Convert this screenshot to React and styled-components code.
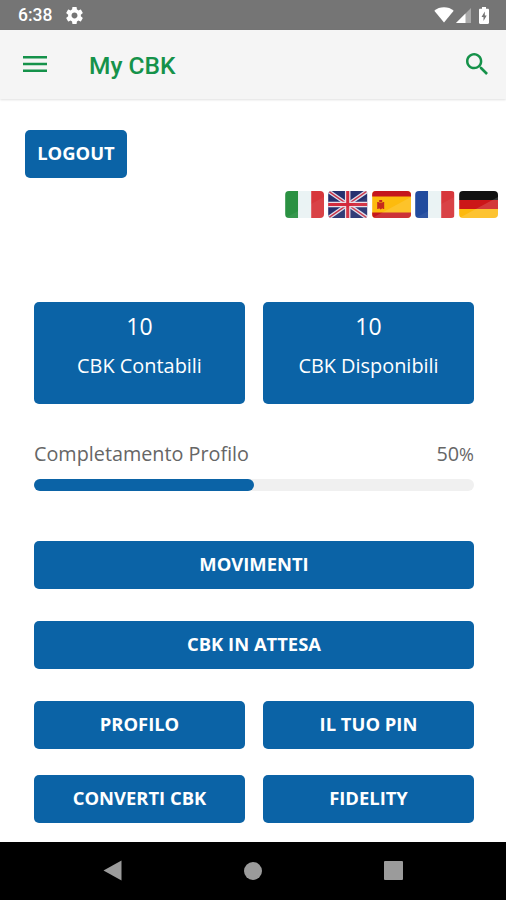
import React from 'react';
import styled, { createGlobalStyle } from 'styled-components';

const counters = [
  { value: 10, label: 'CBK Contabili' },
  { value: 10, label: 'CBK Disponibili' },
];

const profileCompletion = 50;

const GearIcon = () => (
  <svg width="17" height="17" viewBox="2 2 20 20" fill="#fff">
    <path d="M19.43 12.98c.04-.32.07-.64.07-.98s-.03-.66-.07-.98l2.11-1.65c.19-.15.24-.42.12-.64l-2-3.46c-.12-.22-.39-.3-.61-.22l-2.49 1c-.52-.4-1.08-.73-1.69-.98l-.38-2.65C14.46 2.18 14.25 2 14 2h-4c-.25 0-.46.18-.49.42l-.38 2.65c-.61.25-1.17.59-1.69.98l-2.49-1c-.23-.09-.49 0-.61.22l-2 3.46c-.13.22-.07.49.12.64l2.11 1.65c-.04.32-.07.65-.07.98s.03.66.07.98l-2.11 1.65c-.19.15-.24.42-.12.64l2 3.46c.12.22.39.3.61.22l2.49-1c.52.4 1.08.73 1.69.98l.38 2.65c.03.24.24.42.49.42h4c.25 0 .46-.18.49-.42l.38-2.65c.61-.25 1.17-.59 1.69-.98l2.49 1c.23.09.49 0 .61-.22l2-3.46c.12-.22.07-.49-.12-.64l-2.11-1.65zM12 15.5c-1.93 0-3.5-1.57-3.5-3.5s1.57-3.5 3.5-3.5 3.5 1.57 3.5 3.5-1.57 3.5-3.5 3.5z" />
  </svg>
);

const WifiIcon = () => (
  <svg width="20" height="16" viewBox="0 0 20 16" fill="#fff">
    <path d="M0.3 3.7C3 1.4 6.3 .3 10 .3s7 1.1 9.7 3.4L10 15.6z" />
  </svg>
);

const SignalIcon = () => (
  <svg width="15" height="15" viewBox="0 0 15 15">
    <path d="M15 0v15H0z" fill="#a9a9a9" />
    <path d="M9.5 5.500V15H0z" fill="#fff" />
  </svg>
);

const BatteryIcon = () => (
  <svg width="10" height="17" viewBox="0 0 10 17">
    <path d="M3 0h4v1.800h1.800c.7 0 1.200.5 1.200 1.200v12.800c0 .7-.5 1.200-1.200 1.200H1.200C.5 17 0 16.500 0 15.800V3c0-.7.5-1.200 1.200-1.200H3z" fill="#fff" />
    <path d="M5.800 4.500 2.500 10h2v4l3.200-5.500h-1.900z" fill="#757575" />
  </svg>
);

const MenuIcon = () => (
  <svg width="24" height="17" viewBox="0 0 24 17" fill="#15924a">
    <path d="M0 0h24v2.500H0zM0 6.700h24v2.500H0zM0 13.400h24v2.500H0z" />
  </svg>
);

const SearchIcon = () => (
  <svg width="22" height="22" viewBox="3 3 17.500 17.500" fill="#15924a">
    <path d="M15.500 14h-.79l-.28-.27C15.410 12.590 16 11.110 16 9.500 16 5.910 13.090 3 9.500 3S3 5.910 3 9.500 5.910 16 9.500 16c1.610 0 3.090-.59 4.230-1.570l.27.28v.79l5 4.990L20.490 19l-4.990-5zm-6 0C7.010 14 5 11.990 5 9.500S7.010 5 9.500 5 14 7.010 14 9.500 11.990 14 9.500 14z" />
  </svg>
);

const Shine = ({ opacity = 0.06 }) => <path d="M0 27 39 6v21z" fill="#fff" opacity={opacity} />;

const ItalianFlag = () => (
  <FlagStyle viewBox="0 0 39 27">
    <path d="M0 0h13v27H0z" fill="#2a9142" />
    <path d="M13 0h13v27H13z" fill="#eaf3f4" />
    <path d="M26 0h13v27H26z" fill="#d7373b" />
    <Shine />
  </FlagStyle>
);

const BritishFlag = () => (
  <FlagStyle viewBox="0 0 39 27">
    <path d="M0 0h39v27H0z" fill="#26306f" />
    <path d="M0 0 39 27M39 0 0 27" stroke="#dcdcea" strokeWidth="4" />
    <path d="M0 0 39 27M39 0 0 27" stroke="#c93449" strokeWidth="1.500" />
    <path d="M19.500 0v27M0 13.500h39" stroke="#eadfe8" strokeWidth="5.500" />
    <path d="M19.500 0v27M0 13.500h39" stroke="#d32b3d" strokeWidth="3" />
    <Shine />
  </FlagStyle>
);

const SpanishFlag = () => (
  <FlagStyle viewBox="0 0 39 27">
    <path d="M0 0h39v27H0z" fill="#fdbb0d" />
    <path d="M0 0h39v5.500H0zM0 21.500h39V27H0z" fill="#c5161d" />
    <path d="M5 11h1.500v7H5zM10.500 11H12v7h-1.500zM6.500 11.500h4V17l-2 1.500-2-1.500zM7 9h3v2H7z" fill="#c52b1c" />
    <Shine opacity={0.12} />
  </FlagStyle>
);

const FrenchFlag = () => (
  <FlagStyle viewBox="0 0 39 27">
    <path d="M0 0h13v27H0z" fill="#214b9e" />
    <path d="M13 0h13v27H13z" fill="#eaf3f4" />
    <path d="M26 0h13v27H26z" fill="#d7373b" />
    <Shine />
  </FlagStyle>
);

const GermanFlag = () => (
  <FlagStyle viewBox="0 0 39 27">
    <path d="M0 0h39v9H0z" fill="#111" />
    <path d="M0 9h39v9H0z" fill="#cc1718" />
    <path d="M0 18h39v9H0z" fill="#fdb90d" />
    <Shine opacity={0.15} />
  </FlagStyle>
);

const StatusBar = () => (
  <StatusBarStyle>
    <ClockStyle>6:38</ClockStyle>
    <GearIcon />
    <StatusIconsStyle>
      <WifiIcon />
      <SignalIcon />
      <BatteryIcon />
    </StatusIconsStyle>
  </StatusBarStyle>
);

const Toolbar = () => (
  <ToolbarStyle>
    <IconButtonStyle aria-label="Menu">
      <MenuIcon />
    </IconButtonStyle>
    <TitleStyle>My CBK</TitleStyle>
    <IconButtonStyle aria-label="Cerca">
      <SearchIcon />
    </IconButtonStyle>
  </ToolbarStyle>
);

const NavigationBar = () => (
  <NavigationBarStyle>
    <svg width="19" height="21" viewBox="0 0 19 21" fill="#9b9b9b">
      <path d="M18.500 0.500v20L0.500 10.500z" />
    </svg>
    <svg width="18" height="18" viewBox="0 0 18 18" fill="#9b9b9b">
      <circle cx="9" cy="9" r="9" />
    </svg>
    <svg width="19" height="19" viewBox="0 0 19 19" fill="#9b9b9b">
      <rect width="19" height="19" rx="1" />
    </svg>
  </NavigationBarStyle>
);

const App = () => {
  return (
    <>
      <GlobalStyle />
      <ScreenStyle>
        <StatusBar />
        <Toolbar />
        <ContentStyle>
          <LogoutButtonStyle>LOGOUT</LogoutButtonStyle>
          <LanguagesStyle>
            <ItalianFlag />
            <BritishFlag />
            <SpanishFlag />
            <FrenchFlag />
            <GermanFlag />
          </LanguagesStyle>
          <DashboardStyle>
            <PairStyle>
              {counters.map(({ value, label }) => (
                <CounterStyle key={label}>
                  <CounterValueStyle>{value}</CounterValueStyle>
                  <CounterLabelStyle>{label}</CounterLabelStyle>
                </CounterStyle>
              ))}
            </PairStyle>
            <ProgressHeaderStyle>
              <ProgressLabelStyle>Completamento Profilo</ProgressLabelStyle>
              <ProgressValueStyle>
                {profileCompletion}
                <PercentStyle>%</PercentStyle>
              </ProgressValueStyle>
            </ProgressHeaderStyle>
            <ProgressTrackStyle>
              <ProgressFillStyle style={{ width: `${profileCompletion}%` }} />
            </ProgressTrackStyle>
            <ActionsStyle>
              <ButtonStyle>MOVIMENTI</ButtonStyle>
              <ButtonStyle>CBK IN ATTESA</ButtonStyle>
              <PairStyle>
                <ButtonStyle>PROFILO</ButtonStyle>
                <ButtonStyle>IL TUO PIN</ButtonStyle>
                <ButtonStyle>CONVERTI CBK</ButtonStyle>
                <ButtonStyle>FIDELITY</ButtonStyle>
              </PairStyle>
            </ActionsStyle>
          </DashboardStyle>
        </ContentStyle>
        <NavigationBar />
      </ScreenStyle>
    </>
  );
};

const GlobalStyle = createGlobalStyle`
  * {
    box-sizing: border-box;
  }
  body {
    margin: 0;
    background: #fff;
    font-family: "Open Sans", sans-serif;
  }
  svg {
    display: block;
    flex-shrink: 0;
  }
`;

const ScreenStyle = styled.div`
  width: 506px;
  height: 900px;
  display: flex;
  flex-direction: column;
  overflow: hidden;
`;

const StatusBarStyle = styled.div`
  height: 30px;
  display: flex;
  align-items: center;
  padding: 0 17px 0 18px;
  background-color: #757575;
`;

const ClockStyle = styled.div`
  width: 48px;
  padding-top: 1px;
  font: 500 17.500px/29px Roboto, sans-serif;
  color: #fff;
`;

const StatusIconsStyle = styled.div`
  display: flex;
  align-items: center;
  margin-left: auto;

  svg:nth-child(2) {
    margin: 0 8px 0 2px;
  }
`;

const ToolbarStyle = styled.div`
  height: 69px;
  display: flex;
  align-items: center;
  padding: 0 18px 1px 23px;
  background-color: #f5f5f5;
  box-shadow: 0 1px 2px rgba(0, 0, 0, 0.12);
`;

const IconButtonStyle = styled.button`
  padding: 0;
  border: 0;
  background: none;
`;

const TitleStyle = styled.div`
  flex: 1;
  padding: 4px 0 0 42px;
  font: 500 24.500px/30px Roboto, sans-serif;
  color: #15924a;
`;

const ContentStyle = styled.div`
  flex: 1;
  padding-top: 31px;
`;

const ButtonStyle = styled.button`
  height: 48px;
  padding: 0 0 2px;
  border: 0;
  border-radius: 5px;
  background-color: #0b63a6;
  color: #fff;
  font: 700 18.400px/24px "Open Sans", sans-serif;
`;

const LogoutButtonStyle = styled(ButtonStyle)`
  display: block;
  width: 102px;
  margin-left: 25px;
`;

const LanguagesStyle = styled.div`
  display: flex;
  justify-content: flex-end;
  gap: 4px;
  margin-top: 13px;
  padding-right: 8px;
`;

const FlagStyle = styled.svg`
  width: 39.400px;
  height: 27px;
  border-radius: 4px;
`;

const DashboardStyle = styled.div`
  margin-top: 84px;
  padding: 0 32px 0 34px;
`;

const PairStyle = styled.div`
  display: grid;
  grid-template-columns: 1fr 1fr;
  gap: 26px 18px;
`;

const CounterStyle = styled.div`
  height: 102px;
  display: flex;
  flex-direction: column;
  align-items: center;
  padding-top: 8px;
  border-radius: 5px;
  background-color: #0b63a6;
  color: #fff;
`;

const CounterValueStyle = styled.div`
  font-size: 23px;
  line-height: 32px;
`;

const CounterLabelStyle = styled.div`
  margin-top: 10px;
  font-size: 19.900px;
  line-height: 28px;
`;

const ProgressHeaderStyle = styled.div`
  display: flex;
  justify-content: space-between;
  margin-top: 36px;
  line-height: 28px;
  color: #666;
`;

const ProgressLabelStyle = styled.div`
  font-size: 19.800px;
`;

const ProgressValueStyle = styled.div`
  font-size: 19.800px;
`;

const PercentStyle = styled.span`
  font-size: 18px;
  line-height: 1;
`;

const ProgressTrackStyle = styled.div`
  height: 12px;
  margin-top: 11px;
  border-radius: 6px;
  background-color: #f0f0f0;
`;

const ProgressFillStyle = styled.div`
  height: 100%;
  border-radius: 6px;
  background-color: #0b63a6;
`;

const ActionsStyle = styled.div`
  display: flex;
  flex-direction: column;
  gap: 32px;
  margin-top: 50px;
`;

const NavigationBarStyle = styled.div`
  height: 58px;
  display: flex;
  align-items: center;
  justify-content: space-between;
  padding: 0 103px 1px;
  background-color: #000;
`;

export default App;
